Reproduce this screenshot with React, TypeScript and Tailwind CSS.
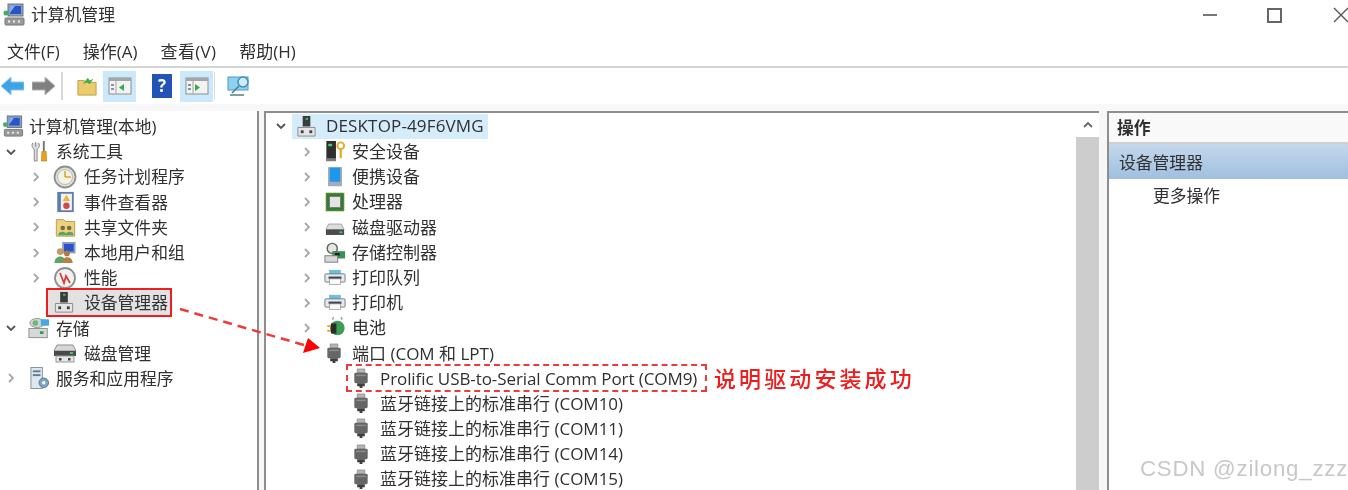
import React from 'react';

const cjk = '"Open Sans", "Noto Sans CJK SC", sans-serif';

type IconProps = { className?: string };

const Chevron = ({ open }: { open?: boolean }) => (
  <svg className="shrink-0" width="12" height="12" viewBox="0 0 12 12" fill="none" stroke={open ? '#555' : '#a8a8a8'} strokeWidth="1.8">
    {open ? <path d="M2 4l4 4 4-4" /> : <path d="M4 2l4 4-4 4" />}
  </svg>
);

const DeviceIcon = ({ className }: IconProps) => (
  <svg className={className} viewBox="0 0 22 24">
    <rect x="7" y="1" width="8" height="11" fill="#3c3c3c" />
    <rect x="10" y="3" width="2.5" height="2" fill="#35c46a" />
    <path d="M2 13h18v9H2z" fill="#e6e6e6" stroke="#8a8a8a" />
    <rect x="5" y="16" width="3" height="3" fill="#444" />
    <rect x="14" y="16" width="3" height="3" fill="#444" />
  </svg>
);

const ComputerIcon = ({ className }: IconProps) => (
  <svg className={className} viewBox="0 0 22 24">
    <rect x="5" y="1" width="15" height="12" fill="#8ea1b8" stroke="#66768a" />
    <rect x="7" y="3" width="11" height="8" fill="#2a52c9" />
    <path d="M7 3h5l-5 7z" fill="#7fb0ef" />
    <rect x="2" y="15" width="19" height="7" rx="1" fill="#9a9a9a" stroke="#777" />
    <rect x="5" y="17.5" width="2" height="2" fill="#eee" />
    <rect x="10" y="17.5" width="2" height="2" fill="#eee" />
    <rect x="15" y="17.5" width="2" height="2" fill="#eee" />
    <circle cx="3" cy="10" r="2.5" fill="#3fae62" />
  </svg>
);

const ToolsIcon = ({ className }: IconProps) => (
  <svg className={className} viewBox="0 0 22 24">
    <path d="M7 2v5M4 3c-2 3 0 6 1.5 6.500V22h3V9.500C10 9 12 6 10 3" fill="#dcdcdc" stroke="#8a8a8a" />
    <rect x="14.500" y="1" width="2" height="11" fill="#777" />
    <path d="M13.500 12h4.500l.5 10h-5.500z" fill="#e8a317" stroke="#b27a0b" strokeWidth=".6" />
  </svg>
);

const ClockIcon = ({ className }: IconProps) => (
  <svg className={className} viewBox="0 0 24 24">
    <circle cx="12" cy="12" r="10.500" fill="#e0e0e0" stroke="#8f8f8f" strokeWidth="1.800" />
    <circle cx="12" cy="12" r="7.500" fill="#f7f3e3" stroke="#bbb" />
    <path d="M12 12V6M12 12h6" stroke="#d9a32b" strokeWidth="1.500" />
  </svg>
);

const LogIcon = ({ className }: IconProps) => (
  <svg className={className} viewBox="0 0 22 24">
    <rect x="2" y="1" width="18" height="22" fill="#5f7fa8" />
    <rect x="6" y="3" width="12" height="18" fill="#eef1f5" />
    <path d="M12 4l4 7H8z" fill="#e9b72c" />
    <circle cx="12" cy="16" r="3.500" fill="#d0474c" />
  </svg>
);

const ShareIcon = ({ className }: IconProps) => (
  <svg className={className} viewBox="0 0 22 24">
    <path d="M1 4h8l2 2h10v16H1z" fill="#ecd27c" stroke="#b89a45" />
    <circle cx="8" cy="13" r="2.500" fill="#7d6a45" />
    <circle cx="15" cy="13" r="2.500" fill="#7d6a45" />
    <path d="M3 21c0-5 9-5 9 0zM11 21c0-5 9-5 9 0z" fill="#58a56a" />
  </svg>
);

const UsersIcon = ({ className }: IconProps) => (
  <svg className={className} viewBox="0 0 24 24">
    <rect x="9" y="1" width="14" height="12" fill="#8ea1b8" />
    <rect x="11" y="3" width="10" height="8" fill="#2a52c9" />
    <circle cx="7" cy="11" r="3.500" fill="#c99a5f" />
    <path d="M1 23c0-9 12-9 12 0z" fill="#5da566" />
    <circle cx="14" cy="13" r="3" fill="#a9794a" />
    <path d="M9 23c0-8 11-8 11 0z" fill="#b7823f" />
  </svg>
);

const PerfIcon = ({ className }: IconProps) => (
  <svg className={className} viewBox="0 0 24 24" fill="none">
    <circle cx="12" cy="12" r="10" fill="#f2f2f2" stroke="#8f8f8f" strokeWidth="1.800" />
    <path d="M7 7l4 10 2-7 4 7" stroke="#d5403d" strokeWidth="1.800" />
  </svg>
);

const StorageIcon = ({ className }: IconProps) => (
  <svg className={className} viewBox="0 0 24 24">
    <ellipse cx="10" cy="6" rx="8" ry="5" fill="#cfd6cf" stroke="#8d9a8d" />
    <rect x="14" y="2" width="9" height="7" rx="1" fill="#4aa6e3" />
    <circle cx="8" cy="6" r="3" fill="#6fb27a" />
    <rect x="1" y="12" width="20" height="10" fill="#d8d8d8" stroke="#8a8a8a" />
    <rect x="13" y="15" width="4" height="3" fill="#2f9e5a" />
  </svg>
);

const DiskIcon = ({ className }: IconProps) => (
  <svg className={className} viewBox="0 0 24 20">
    <path d="M4 2h16l3 6H1z" fill="#d7d7d7" stroke="#8d8d8d" />
    <rect x="1" y="8" width="22" height="5" fill="#4a4a4a" />
    <rect x="17" y="9" width="3" height="2" fill="#3ccf70" />
    <rect x="3" y="13" width="18" height="6" fill="#e6e6e6" stroke="#999" />
    <rect x="6" y="15" width="2.500" height="2.500" fill="#444" />
    <rect x="15" y="15" width="2.500" height="2.500" fill="#444" />
  </svg>
);

const ServicesIcon = ({ className }: IconProps) => (
  <svg className={className} viewBox="0 0 22 24">
    <rect x="2" y="1" width="12" height="22" fill="#dfe6ec" stroke="#8193a3" />
    <rect x="4" y="4" width="8" height="2" fill="#5e7b96" />
    <rect x="4" y="8" width="8" height="2" fill="#5e7b96" />
    <circle cx="15.500" cy="17" r="5" fill="#7ea3c4" stroke="#56799a" />
    <circle cx="15.500" cy="17" r="1.800" fill="#fff" />
  </svg>
);

const KeyIcon = ({ className }: IconProps) => (
  <svg className={className} viewBox="0 0 22 24">
    <rect x="2" y="1" width="10" height="21" fill="#2e2e2e" />
    <rect x="4" y="4" width="4" height="2.500" fill="#38d46f" />
    <rect x="2" y="19" width="10" height="3" fill="#7c7c7c" />
    <circle cx="17" cy="6" r="3.500" fill="none" stroke="#e3ac2c" strokeWidth="2" />
    <path d="M17 9v10" stroke="#e3ac2c" strokeWidth="2.400" />
  </svg>
);

const TabletIcon = ({ className }: IconProps) => (
  <svg className={className} viewBox="0 0 22 24">
    <rect x="3" y="1" width="16" height="22" rx="1" fill="#a4acb6" />
    <rect x="5" y="2" width="12" height="16" fill="#1e97ee" />
  </svg>
);

const CpuIcon = ({ className }: IconProps) => (
  <svg className={className} viewBox="0 0 22 22">
    <rect x="1" y="1" width="20" height="20" fill="#2f7d3a" stroke="#c4a544" strokeDasharray="1.500 1" />
    <rect x="5" y="5" width="12" height="12" fill="#e4e4e4" stroke="#777" />
  </svg>
);

const DriveIcon = ({ className }: IconProps) => (
  <svg className={className} viewBox="0 0 22 14">
    <path d="M4 1h14l3 6H1z" fill="#dcdcdc" stroke="#a0a0a0" />
    <rect x="1" y="7" width="20" height="6" fill="#4c4c4c" />
    <rect x="16" y="9" width="3" height="2" fill="#3ccf70" />
  </svg>
);

const ControllerIcon = ({ className }: IconProps) => (
  <svg className={className} viewBox="0 0 24 24">
    <circle cx="9" cy="7" r="5.500" fill="#e6e6e6" stroke="#666" strokeWidth="1.600" />
    <rect x="9" y="10" width="14" height="8" fill="#3c8f5b" />
    <rect x="12" y="12" width="5" height="3" fill="#222" />
    <rect x="1" y="15" width="14" height="7" fill="#d8d8d8" stroke="#777" />
  </svg>
);

const PrinterIcon = ({ className }: IconProps) => (
  <svg className={className} viewBox="0 0 24 18">
    <rect x="6" y="1" width="12" height="4" fill="#62c3e8" stroke="#7aa3b5" strokeWidth=".6" />
    <rect x="1" y="5" width="22" height="9" rx="1" fill="#e4eaee" stroke="#6b7a86" />
    <rect x="5" y="8" width="14" height="2.500" fill="#444" />
    <rect x="6" y="10.500" width="12" height="6" fill="#fafafa" stroke="#8a8a8a" strokeWidth=".7" />
  </svg>
);

const BatteryIcon = ({ className }: IconProps) => (
  <svg className={className} viewBox="0 0 22 24">
    <path d="M8 3a5 5 0 0 1 10 0" fill="none" stroke="#999" strokeWidth="1.500" />
    <ellipse cx="13" cy="12" rx="8" ry="8" fill="#3f9c55" />
    <rect x="2" y="9" width="5" height="2" fill="#d8a82e" />
    <rect x="2" y="14" width="5" height="2" fill="#d8a82e" />
    <path d="M6 7h6v11H6z" fill="#2c2c2c" />
  </svg>
);

const PortIcon = ({ className }: IconProps) => (
  <svg className={className} viewBox="0 0 16 22">
    <path d="M4 1h8v4H4z" fill="#b5b5b5" stroke="#777" strokeWidth=".6" />
    <rect x="1" y="5" width="14" height="11" rx="1.500" fill="#666" />
    <rect x="3" y="7" width="10" height="1.500" fill="#8f8f8f" />
    <path d="M4 16h8v3H9.500v2h-3v-2H4z" fill="#3e3e3e" />
  </svg>
);

type RowData = {
  text: string;
  Icon: React.FC<IconProps>;
  iconClass: string;
  hasChevron?: boolean;
  open?: boolean;
  indent: string;
  slot: string;
};

// chevron sits 17px left of the icon slot, centered on a zero width box
const TreeRow = ({ row }: { row: RowData }) => (
  <div className={`flex h-[25.2px] items-center ${row.indent}`}>
    <span className="relative -left-[17px] flex w-0 justify-center">
      {row.hasChevron && <Chevron open={row.open} />}
    </span>
    <span className={`flex shrink-0 justify-center ${row.slot}`}>
      <row.Icon className={row.iconClass} />
    </span>
    <span className="whitespace-nowrap">{row.text}</span>
  </div>
);

const lvl2 = { hasChevron: true, indent: 'pl-[53px]', slot: 'w-[24px] mr-[7px]' };
const lvl1 = { hasChevron: true, indent: 'pl-[28px]', slot: 'w-[22px] mr-[6px]' };
const dev = { hasChevron: true, indent: 'pl-[58px]', slot: 'w-[22px] mr-[6px]' };

const left: RowData[] = [
  { ...lvl1, text: '系统工具', Icon: ToolsIcon, iconClass: 'h-[23px] w-[21px]', open: true },
  { ...lvl2, text: '任务计划程序', Icon: ClockIcon, iconClass: 'h-[24px] w-[24px]' },
  { ...lvl2, text: '事件查看器', Icon: LogIcon, iconClass: 'h-[22px] w-[21px]' },
  { ...lvl2, text: '共享文件夹', Icon: ShareIcon, iconClass: 'h-[22px] w-[21px]' },
  { ...lvl2, text: '本地用户和组', Icon: UsersIcon, iconClass: 'h-[23px] w-[24px]' },
  { ...lvl2, text: '性能', Icon: PerfIcon, iconClass: 'h-[24px] w-[24px]' },
];

const leftBottom: RowData[] = [
  { ...lvl1, text: '存储', Icon: StorageIcon, iconClass: 'h-[23px] w-[24px]', open: true },
  { ...lvl2, hasChevron: false, text: '磁盘管理', Icon: DiskIcon, iconClass: 'h-[20px] w-[24px]' },
  { ...lvl1, text: '服务和应用程序', Icon: ServicesIcon, iconClass: 'h-[24px] w-[21px]' },
];

const devices: RowData[] = [
  { ...dev, text: '安全设备', Icon: KeyIcon, iconClass: 'h-[23px] w-[22px]' },
  { ...dev, text: '便携设备', Icon: TabletIcon, iconClass: 'h-[21px] w-[20px]' },
  { ...dev, text: '处理器', Icon: CpuIcon, iconClass: 'h-[20px] w-[20px]' },
  { ...dev, text: '磁盘驱动器', Icon: DriveIcon, iconClass: 'mt-1 h-[13px] w-[20px]' },
  { ...dev, text: '存储控制器', Icon: ControllerIcon, iconClass: 'h-[22px] w-[22px]' },
  { ...dev, text: '打印队列', Icon: PrinterIcon, iconClass: 'h-[17px] w-[23px]' },
  { ...dev, text: '打印机', Icon: PrinterIcon, iconClass: 'h-[17px] w-[23px]' },
  { ...dev, text: '电池', Icon: BatteryIcon, iconClass: 'h-[22px] w-[21px]' },
];

const ports = ['蓝牙链接上的标准串行 (COM10)', '蓝牙链接上的标准串行 (COM11)', '蓝牙链接上的标准串行 (COM14)', '蓝牙链接上的标准串行 (COM15)'];

const PortRow = ({ text }: { text: string }) => (
  <div className="flex h-[25.2px] items-center pl-[87px]">
    <PortIcon className="mr-[11px] h-[21px] w-[16px] shrink-0" />
    <span className="whitespace-nowrap">{text}</span>
  </div>
);

const PaneToggle = ({ dir }: { dir: 'left' | 'right' }) => (
  <div className="flex h-[31px] w-[33px] items-center justify-center bg-[#cce8fb]">
    <svg width="24" height="20" viewBox="0 0 24 20">
      <rect x="1" y="2" width="22" height="16" fill="#f3f3f3" stroke="#8e8e8e" />
      <rect x="1" y="2" width="22" height="3" fill="#a5a5a5" />
      <path d="M8 5v13" stroke="#a5a5a5" />
      <rect x="3" y="8" width="3" height="2" fill="#7c93b8" />
      <rect x="3" y="12" width="3" height="2" fill="#7c93b8" />
      <path d={dir === 'left' ? 'M16 8v7l-5-3.500z' : 'M10 8v7l5-3.500z'} fill="#2fae4e" />
    </svg>
  </div>
);

export default function App() {
  return (
    <div className="relative flex h-[490px] w-[1348px] flex-col overflow-hidden bg-white text-[16.8px] text-[#303030] blur-[0.5px]" style={{ fontFamily: cjk }}>
      {/* title bar */}
      <div className="flex h-[30px] items-center pl-[3px]">
        <ComputerIcon className="mr-[6px] h-[24px] w-[22px]" />
        <span>计算机管理</span>
        <div className="ml-auto flex items-center text-[#555]">
          <span className="mr-[50px] h-[2px] w-[14px] bg-[#777]" />
          <span className="mr-[51px] h-[15px] w-[15px] border-2 border-[#666]" />
          <svg className="mr-[-1px]" width="16" height="16" viewBox="0 0 16 16" stroke="#555" strokeWidth="1.400">
            <path d="M1 1l14 14M15 1L1 15" />
          </svg>
        </div>
      </div>

      {/* menu */}
      <div className="flex h-[38px] items-center gap-[23px] border-b-2 border-[#d4d4d4] pl-[7px] pt-[8px] text-[17px]">
        <span>文件(F)</span>
        <span>操作(A)</span>
        <span className="tracking-[.3px]">查看(V)</span>
        <span>帮助(H)</span>
      </div>

      {/* toolbar */}
      <div className="flex h-[36px] items-center">
        <svg className="ml-[1px]" width="23" height="20" viewBox="0 0 23 20">
          <path d="M0 10L10 1v5h13v8H10v5z" fill="#3ea2e4" stroke="#8cc8ef" />
        </svg>
        <svg className="ml-[8px]" width="23" height="20" viewBox="0 0 23 20">
          <path d="M23 10L13 1v5H0v8h13v5z" fill="#808080" stroke="#b5b5b5" />
        </svg>
        <span className="ml-[6px] h-[28px] w-[2px] bg-[#d8d8d8]" />
        <svg className="ml-[14px]" width="20" height="22" viewBox="0 0 22 22">
          <path d="M1 5h7l2 2h11v14H1z" fill="#eccb6c" stroke="#b99a45" />
          <path d="M6 9l6-7 2 3 4-2-4 6-3-2z" fill="#3fae4b" />
        </svg>
        <span className="ml-[6px]"><PaneToggle dir="left" /></span>
        <svg className="ml-[16px]" width="20" height="24" viewBox="0 0 20 24">
          <rect x="0" y="0" width="20" height="24" fill="#2353b5" />
          <text x="10" y="18" fontSize="17" fontWeight="700" textAnchor="middle" fill="#fff">?</text>
        </svg>
        <span className="ml-[8px]"><PaneToggle dir="right" /></span>
        <span className="ml-[1px] h-[28px] w-[1px] bg-[#dedede]" />
        <svg className="ml-[12px]" width="24" height="22" viewBox="0 0 24 22" fill="none">
          <rect x="1" y="2" width="20" height="13" fill="#8fd0ee" stroke="#4d9cc7" />
          <circle cx="16" cy="7" r="5" fill="#cfeaf8" stroke="#3d8fbc" strokeWidth="1.500" />
          <path d="M12 11l-7 7M3 20h14" stroke="#4d7f9c" strokeWidth="1.600" />
        </svg>
      </div>

      <div className="h-[7px] bg-[#f8f8f8]" />

      {/* panes */}
      <div className="flex min-h-0 flex-1 bg-[#f7f7f7]">
        <div className="w-[259px] shrink-0 overflow-hidden border-r-2 border-[#8e8e8e] bg-white pt-[3px]">
          <div className="flex h-[25.2px] items-center pl-[2px]">
            <ComputerIcon className="mr-[5px] h-[23px] w-[22px]" />
            <span>计算机管理(本地)</span>
          </div>
          {left.map(r => <TreeRow key={r.text} row={r} />)}
          <div className="flex h-[25.2px] items-center pl-[48px]">
            <div className="flex h-[25px] w-[122px] items-center bg-[#e2e2e2] pl-[5px] outline-2 outline-[#ef1d1d]">
              <DeviceIcon className="mr-[9px] h-[23px] w-[22px]" />
              <span className="whitespace-nowrap">设备管理器</span>
            </div>
          </div>
          {leftBottom.map(r => <TreeRow key={r.text} row={r} />)}
        </div>

        <div className="ml-[5px] flex w-[835px] shrink-0 border-t-2 border-l-2 border-[#8e8e8e] bg-white text-[17px]">
          <div className="min-w-0 flex-1 overflow-hidden pt-[1px]">
            <div className="flex h-[25.2px] items-center pb-[1px] pl-[9px]">
              <Chevron open />
              <div className="ml-[5px] flex h-[25px] w-[196px] items-center bg-[#d5ecfb] pl-[4px]">
                <DeviceIcon className="mr-[9px] h-[23px] w-[21px]" />
                <span className="tracking-[.15px]">DESKTOP-49F6VMG</span>
              </div>
            </div>
            {devices.map(r => <TreeRow key={r.text} row={r} />)}
            <div className="flex h-[25.2px] items-center pl-[60px]">
              <PortIcon className="mr-[10px] h-[21px] w-[16px] shrink-0" />
              <span>端口 (COM 和 LPT)</span>
            </div>
            <div className="flex h-[25.2px] items-center">
              <div className="ml-[82px] flex h-[24px] w-[357px] items-center pl-[5px] outline-2 outline-[#ef3a3a] outline-dashed">
                <PortIcon className="mr-[11px] h-[21px] w-[16px] shrink-0" />
                <span className="whitespace-nowrap tracking-[-.08px]">Prolific USB-to-Serial Comm Port (COM9)</span>
              </div>
              <span className="ml-[9px] whitespace-nowrap text-[22px] font-medium tracking-[3.1px] text-[#ee1c1c]">说明驱动安装成功</span>
            </div>
            {ports.map(t => <PortRow key={t} text={t} />)}
          </div>
          <div className="flex w-[23px] shrink-0 flex-col">
            <div className="flex h-[24px] items-center justify-center">
              <svg width="10" height="8" viewBox="0 0 10 8" fill="none" stroke="#666" strokeWidth="1.800"><path d="M1 6l4-4 4 4" /></svg>
            </div>
            <div className="flex-1 bg-[#cdcdcd]" />
          </div>
        </div>

        <div className="ml-[8px] min-w-0 flex-1 border-t-2 border-l-2 border-[#8e8e8e] bg-white">
          <div className="flex h-[31px] items-center border-b-2 border-[#d0d0d0] bg-[#f9f9f9] pl-[8px] font-bold">操作</div>
          <div className="flex h-[35px] items-center bg-gradient-to-b from-[#c5d8ec] to-[#9fbfdf] pl-[10px] pt-[2px]">设备管理器</div>
          <div className="pl-[44px] pt-[4px]">更多操作</div>
        </div>
      </div>

      {/* annotation arrow */}
      <svg className="absolute left-0 top-0" width="1348" height="490" fill="none">
        <path d="M180 309L304 345" stroke="#ef3a3a" strokeWidth="2.500" strokeDasharray="9 6" />
        <path d="M303 353l5-15 12 10z" fill="#f00" />
      </svg>

      <span className="absolute left-[1140px] top-[452px] whitespace-nowrap text-[22.3px] tracking-[.75px] text-[#c8c8c8]" style={{ fontFamily: '"Liberation Sans", sans-serif' }}>CSDN @zilong_zzz</span>
    </div>
  );
}
